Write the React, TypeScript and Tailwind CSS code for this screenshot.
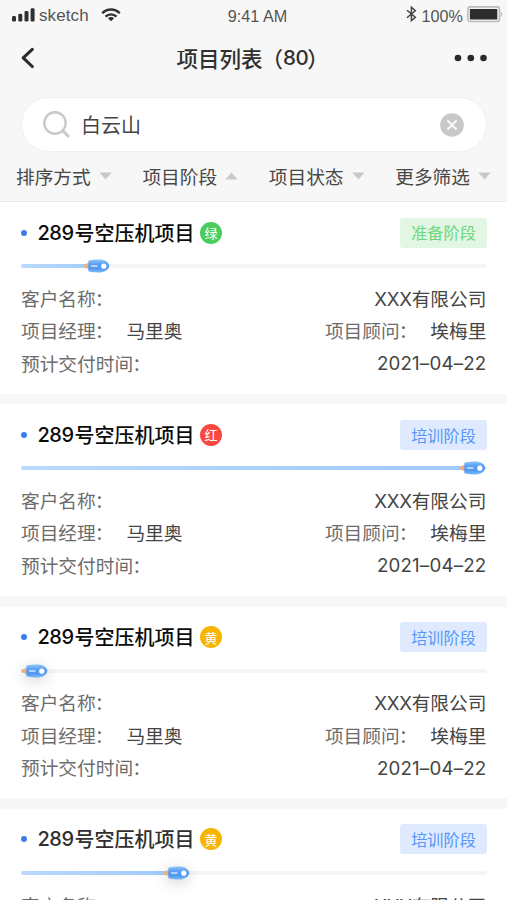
import React from 'react';

const HAN = "font-['Noto_Sans_CJK_SC',sans-serif]";
const LATIN = "font-['Liberation_Sans',Arial,sans-serif]";

type Project = {
  id: number;
  level: string;
  levelClass: string;
  stage: string;
  stageClass: string;
  progress: number;
  titleClass: string;
  shadow: boolean;
};

const BLUE_STAGE = 'bg-[#dfeaff] text-[#5797f8]';

const projects: Project[] = [
  { id: 1, level: '绿', levelClass: 'bg-[#4bcd5d]', stage: '准备阶段', stageClass: 'bg-[#e1f7e3] text-[#6fd67c]', progress: 88, titleClass: 'text-[#0c0c0c]', shadow: false },
  { id: 2, level: '红', levelClass: 'bg-[#f9483f]', stage: '培训阶段', stageClass: BLUE_STAGE, progress: 464, titleClass: 'text-[#0c0c0c]', shadow: false },
  { id: 3, level: '黄', levelClass: 'bg-[#f7b500]', stage: '培训阶段', stageClass: BLUE_STAGE, progress: 26, titleClass: 'text-[#0c0c0c]', shadow: true },
  { id: 4, level: '黄', levelClass: 'bg-[#f7b500]', stage: '培训阶段', stageClass: BLUE_STAGE, progress: 168, titleClass: 'text-[#303030]', shadow: true },
];

const filters = [
  { label: '排序方式', up: false },
  { label: '项目阶段', up: true },
  { label: '项目状态', up: false },
  { label: '更多筛选', up: false },
];

function StatusBar() {
  return (
    <div className={`flex h-[30px] items-center text-[#555] ${LATIN}`}>
      <div className="flex flex-1 items-center pl-3">
        <svg width="23" height="14" viewBox="0 0 23 14" fill="#303030">
          <rect x="0" y="8" width="4" height="5.6" rx="1.4" />
          <rect x="6.3" y="5.7" width="4" height="7.9" rx="1.4" />
          <rect x="12.5" y="3" width="4" height="10.6" rx="1.4" />
          <rect x="18.6" y="0.3" width="4" height="13.3" rx="1.4" />
        </svg>
        <span className="ml-1 text-[17px] leading-none tracking-[0.1px]">sketch</span>
        <svg className="ml-3" width="20" height="14" viewBox="0 0 20 14" fill="none" stroke="#303030" strokeWidth="2.3">
          <path d="M1.2 5.3C6.2.2 13.8.2 18.8 5.3" />
          <path d="M4.5 8.6C7.6 5.5 12.4 5.5 15.5 8.6" />
          <path d="M10 13.3 6.9 10.2C8.7 8.6 11.3 8.6 13.1 10.2Z" fill="#303030" stroke="none" />
        </svg>
      </div>
      <span className="pt-[3px] text-[16.2px] leading-none">9:41 AM</span>
      <div className="flex flex-1 items-center justify-end pr-1">
        <svg className="mb-[2px]" width="11" height="16" viewBox="0 0 11 16" fill="none" stroke="#444" strokeWidth="1.5">
          <path d="M1 4.2 9.3 11.2 5.4 14.6V1.2L9.3 4.7 1 11.8" />
        </svg>
        <span className="ml-[5px] pt-[2px] text-[16.2px] leading-none">100%</span>
        <svg className="ml-1" width="36" height="17" viewBox="0 0 36 17">
          <rect x="0.9" y="0.9" width="31.6" height="14.6" rx="2.5" fill="#f7f7f7" stroke="#bcbcbc" strokeWidth="1.6" />
          <rect x="2.9" y="3" width="27.4" height="10.6" rx="0.6" fill="#2d2d2d" />
          <path d="M34.2 6.2q1.4 2 0 4z" fill="#bcbcbc" stroke="#bcbcbc" strokeWidth="0.7" />
        </svg>
      </div>
    </div>
  );
}

function NavBar() {
  return (
    <div className="flex h-[56px] items-center justify-between pl-5 pr-[19px]">
      <svg width="36" height="24" viewBox="0 0 36 24" fill="none" stroke="#2b2b2b" strokeWidth="3.1" strokeLinecap="round" strokeLinejoin="round">
        <path d="M12.3 3.3 3.2 11.8 12.3 20.5" />
      </svg>
      <h1 className={`flex h-[22px] w-[155px] items-center whitespace-nowrap text-[21.5px] font-medium leading-none text-[#303030] ${HAN}`}>
        <span>项目列表</span>
        <span className="-ml-[1px]">（</span>
        <span className="font-['Inter',sans-serif] text-[20.5px] tracking-[-0.5px]">80</span>
        <span className="-ml-[1px]">）</span>
      </h1>
      <svg width="36" height="8" viewBox="0 0 36 8" fill="#2b2b2b">
        <circle cx="6" cy="4" r="3.3" />
        <circle cx="18.8" cy="4" r="3.3" />
        <circle cx="31.5" cy="4" r="3.3" />
      </svg>
    </div>
  );
}

function SearchBox() {
  return (
    <div className="ml-[21px] mr-[20px] mt-[11px] flex h-[55px] items-center rounded-full border border-[#f0f0f0] bg-white pl-[20px] pr-[22px]">
      <svg width="29" height="29" viewBox="0 0 29 29" fill="none" stroke="#c9c9c9" strokeWidth="2.4">
        <circle cx="13" cy="13" r="10.7" />
        <path d="M20.4 20.4 27 27" strokeWidth="2.9" />
      </svg>
      <span className={`ml-[10px] flex-1 pt-px text-[20px] leading-none text-[#454545] ${HAN}`}>白云山</span>
      <svg width="24" height="24" viewBox="0 0 24 24">
        <circle cx="12" cy="12" r="11.8" fill="#c8c8c8" />
        <path d="M7.4 7.4 16.6 16.6M16.6 7.4 7.4 16.6" stroke="#fff" strokeWidth="1.7" />
      </svg>
    </div>
  );
}

function Filters() {
  return (
    <div className="flex h-[50px] items-center justify-between border-b border-[#eaeaea] pl-4 pr-[16px]">
      {filters.map((f) => (
        <button key={f.label} className={`flex items-center gap-2 text-[18.7px] leading-none text-[#474747] ${HAN}`}>
          {f.label}
          <svg width="13" height="8" viewBox="0 0 13 8" fill="#c9c9c9">
            <path d={f.up ? 'M0.3 7.5H12.7L6.5 0.4Z' : 'M0.3 0.5H12.7L6.5 7.6Z'} />
          </svg>
        </button>
      ))}
    </div>
  );
}

function Rocket({ shadow }: { shadow: boolean }) {
  return (
    <svg
      className={`absolute -right-px top-1/2 -translate-y-1/2 overflow-visible ${shadow ? 'drop-shadow-[0_3px_7px_rgba(0,0,0,0.18)]' : ''}`}
      width="27" height="14" viewBox="0 0 27 14"
    >
      <defs>
        <linearGradient id="rocket-body" x1="0" y1="0" x2="0" y2="1">
          <stop offset="0" stopColor="#8cc6fc" />
          <stop offset="0.35" stopColor="#5a9ff2" />
          <stop offset="0.7" stopColor="#5297ee" />
          <stop offset="1" stopColor="#7fbcfb" />
        </linearGradient>
      </defs>
      <path d="M5.8 3.9C3.2 4 2.2 5.7.4 7 2.2 8.3 3.2 10 5.8 10.1Z" fill="#f4ad72" />
      <path d="M5.3 2.2Q5.3 1.6 6 1.5 12 .1 18 .6 25.2 1.6 26.4 7 25.2 12.4 18 13.4 12 13.9 6 12.5 5.3 12.4 5.3 11.8Z" fill="url(#rocket-body)" />
      <path d="M8.5 7H14" stroke="#cfe6ff" strokeWidth="1.3" strokeLinecap="round" />
      <circle cx="20.8" cy="7.2" r="2.6" fill="#fff" />
    </svg>
  );
}

function Label({ children, className = '' }: { children: string; className?: string }) {
  return (
    <dt className={`flex text-[#6c6c6c] ${className}`}>
      <span>{children}</span>
      <span className="-ml-[1px] mr-[1px] w-[18.7px]">：</span>
    </dt>
  );
}

function ProjectCard({ project }: { project: Project }) {
  return (
    <article className="h-[191.5px] shrink-0 bg-white pl-[21px] pr-[20px]">
      <div className="flex h-[61px] items-center">
        <span className="mr-[10.5px] size-[6px] rounded-full bg-[#3d7df0]" />
        <h2 className={`flex items-center text-[20px] font-medium leading-none ${project.titleClass} ${HAN}`}>
          <span className="w-[37px] font-['Inter',sans-serif] text-[20px] tracking-[-0.5px]">289</span>号空压机项目
        </h2>
        <span className={`ml-[5.5px] flex size-[22px] items-center justify-center rounded-full text-[13px] leading-none text-white ${HAN} ${project.levelClass}`}>
          {project.level}
        </span>
        <span className={`ml-auto flex h-[30px] w-[87px] items-center justify-center rounded-[3px] text-[16.2px] leading-none ${HAN} ${project.stageClass}`}>
          {project.stage}
        </span>
      </div>
      <div className="mt-[1px] h-[4px] rounded-full bg-[#f5f5f5]">
        <div
          className="relative h-full rounded-full bg-linear-to-r from-[#b9dafd] to-[#9dc8fb]"
          style={{ width: project.progress }}
        >
          <Rocket shadow={project.shadow} />
        </div>
      </div>
      <dl className={`mr-[0.6px] mt-[13.8px] text-[18.7px] leading-[32.4px] text-[#454545] ${HAN}`}>
        <div className="flex h-[32.4px] justify-between">
          <Label>客户名称</Label>
          <dd><span className="font-['Inter',sans-serif] leading-none tracking-[-0.3px]">XXX</span>有限公司</dd>
        </div>
        <div className="flex h-[32.4px]">
          <Label>项目经理</Label>
          <dd className="ml-3">马里奥</dd>
          <Label className="ml-auto">项目顾问</Label>
          <dd className="ml-3">埃梅里</dd>
        </div>
        <div className="flex h-[32.4px] justify-between">
          <Label>预计交付时间</Label>
          <dd className="pt-[1.5px] font-['Inter',sans-serif] tracking-[0.2px]">2021–04–22</dd>
        </div>
      </dl>
    </article>
  );
}

export default function App() {
  return (
    <main className="h-[900px] w-[507px] overflow-hidden bg-[#f7f7f7]">
      <header className="h-[202px]">
        <StatusBar />
        <NavBar />
        <SearchBox />
        <Filters />
      </header>
      <section className="flex flex-col gap-[10.8px]">
        {projects.map((p) => (
          <ProjectCard key={p.id} project={p} />
        ))}
      </section>
    </main>
  );
}
